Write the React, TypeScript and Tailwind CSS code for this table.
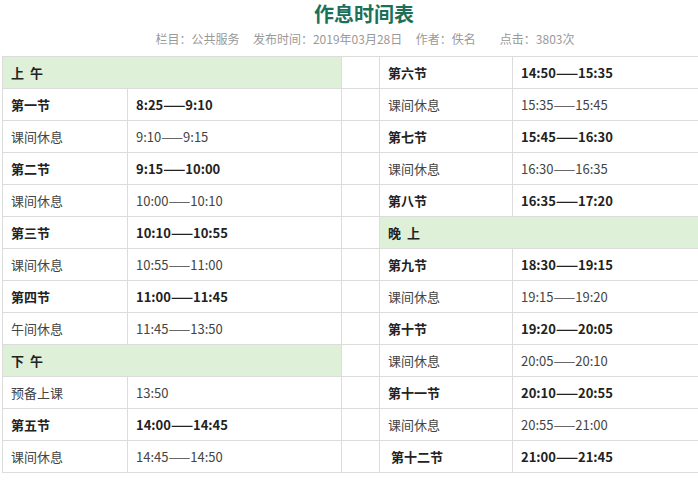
const FONT = '"Microsoft YaHei", "Noto Sans CJK SC", "Noto Sans", sans-serif';

type Cell = { name: string; time: string; bold?: boolean; head?: boolean; indent?: boolean };

const left: Cell[] = [
  { name: "上\u00a0 午", time: "", head: true },
  { name: "第一节", time: "8:25——9:10", bold: true },
  { name: "课间休息", time: "9:10——9:15" },
  { name: "第二节", time: "9:15——10:00", bold: true },
  { name: "课间休息", time: "10:00——10:10" },
  { name: "第三节", time: "10:10——10:55", bold: true },
  { name: "课间休息", time: "10:55——11:00" },
  { name: "第四节", time: "11:00——11:45", bold: true },
  { name: "午间休息", time: "11:45——13:50" },
  { name: "下\u00a0 午", time: "", head: true },
  { name: "预备上课", time: "13:50" },
  { name: "第五节", time: "14:00——14:45", bold: true },
  { name: "课间休息", time: "14:45——14:50" },
];

const right: Cell[] = [
  { name: "第六节", time: "14:50——15:35", bold: true },
  { name: "课间休息", time: "15:35——15:45" },
  { name: "第七节", time: "15:45——16:30", bold: true },
  { name: "课间休息", time: "16:30——16:35" },
  { name: "第八节", time: "16:35——17:20", bold: true },
  { name: "晚\u00a0 上", time: "", head: true },
  { name: "第九节", time: "18:30——19:15", bold: true },
  { name: "课间休息", time: "19:15——19:20" },
  { name: "第十节", time: "19:20——20:05", bold: true },
  { name: "课间休息", time: "20:05——20:10" },
  { name: "第十一节", time: "20:10——20:55", bold: true },
  { name: "课间休息", time: "20:55——21:00" },
  { name: "第十二节", time: "21:00——21:45", bold: true, indent: true },
];

function Cells({ c }: { c: Cell }) {
  if (c.head) {
    return (
      <td colSpan={2} className="h-8 border border-[#dcdcdc] bg-[#dff0d8] px-2 font-bold text-[#222]">
        {c.name}
      </td>
    );
  }
  const txt = c.bold ? "font-bold text-[#222]" : "text-[#444]";
  return (
    <>
      <td className={`h-8 border border-[#dcdcdc] px-2 ${txt}`}>
        <span className={c.indent ? "pl-[3px]" : ""}>{c.name}</span>
      </td>
      <td className={`h-8 border border-[#dcdcdc] px-2 ${txt}`}>{c.time}</td>
    </>
  );
}

export default function App() {
  return (
    <div className="h-[498px] w-[698px] overflow-hidden bg-white" style={{ fontFamily: FONT }}>
      <h1 className="pl-[30px] pt-[2px] text-center text-[20px] font-bold leading-[24px] text-[#1d7058]">作息时间表</h1>
      <p className="mt-[4px] pl-[32px] text-center text-[12px] leading-[18px] text-[#999]">
        栏目：公共服务&nbsp;&nbsp;&nbsp;&nbsp; 发布时间：2019年03月28日&nbsp;&nbsp;&nbsp;&nbsp; 作者：佚名&nbsp;&nbsp;&nbsp;&nbsp;&nbsp;&nbsp;&nbsp;&nbsp; 点击：3803次
      </p>
      <table className="ml-[2px] mt-[8px] w-[760px] table-fixed border-collapse text-[13px] leading-[20px]">
        <colgroup>
          <col className="w-[125px]" />
          <col className="w-[214px]" />
          <col className="w-[38px]" />
          <col className="w-[133px]" />
          <col />
        </colgroup>
        <tbody>
          {left.map((l, i) => (
            <tr key={i}>
              <Cells c={l} />
              <td className="h-8 border border-[#dcdcdc]" />
              <Cells c={right[i]} />
            </tr>
          ))}
        </tbody>
      </table>
    </div>
  );
}
